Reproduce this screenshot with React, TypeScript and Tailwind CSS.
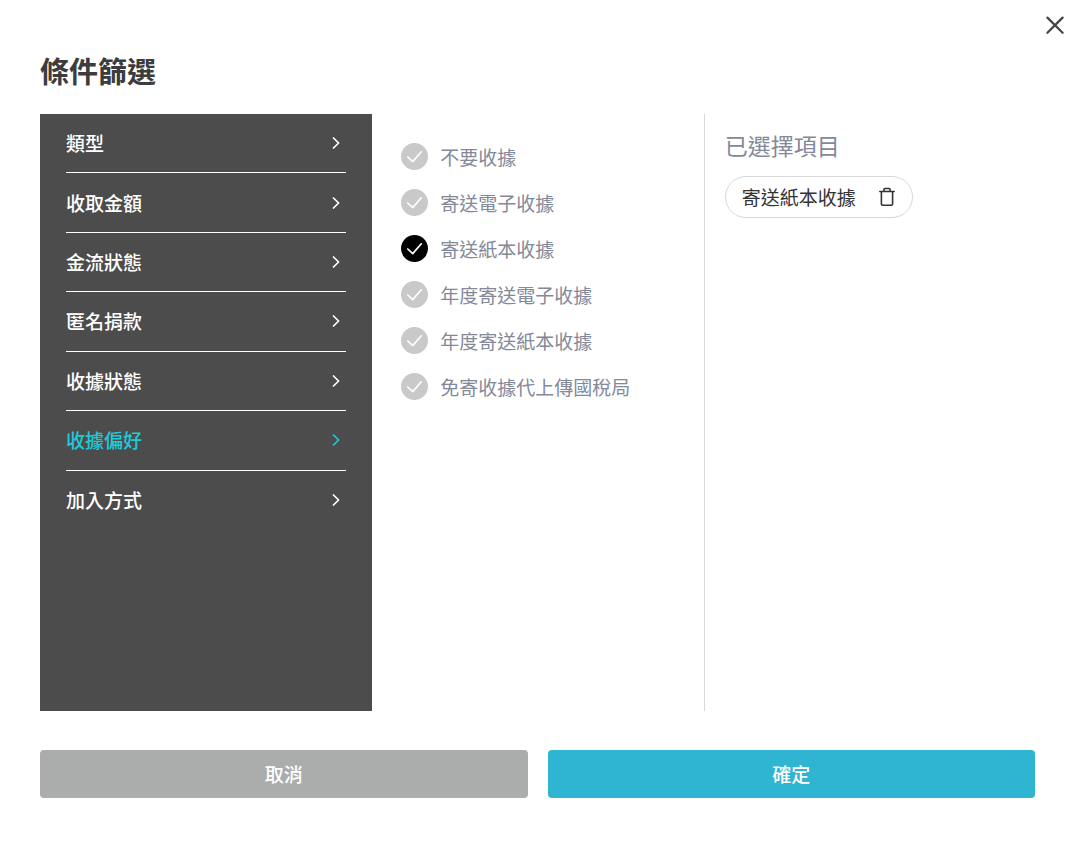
import { useState } from "react";

const categories = ["類型", "收取金額", "金流狀態", "匿名捐款", "收據狀態", "收據偏好", "加入方式"];

const receiptOptions = [
  "不要收據",
  "寄送電子收據",
  "寄送紙本收據",
  "年度寄送電子收據",
  "年度寄送紙本收據",
  "免寄收據代上傳國稅局",
];

function CloseIcon() {
  return (
    <svg viewBox="0 0 18 18" className="size-[18px]" fill="none" stroke="currentColor" strokeWidth="2.2" strokeLinecap="round" aria-hidden="true">
      <path d="M1.4 1.6 16.6 16.8M16.6 1.6 1.4 16.8" />
    </svg>
  );
}

function ChevronIcon() {
  return (
    <svg viewBox="0 0 8 12" className="h-3 w-2" fill="none" stroke="currentColor" strokeWidth="1.7" strokeLinecap="round" strokeLinejoin="round" aria-hidden="true">
      <path d="M1.5 1 6.6 6 1.5 11" />
    </svg>
  );
}

function CheckIcon() {
  return (
    <svg viewBox="0 0 27 27" className="pointer-events-none col-start-1 row-start-1 size-[27px]" fill="none" stroke="#fff" strokeWidth="1.7" strokeLinecap="round" strokeLinejoin="round" aria-hidden="true">
      <path d="M6.8 14 11.7 18.6 20.3 8.8" />
    </svg>
  );
}

function TrashIcon() {
  return (
    <svg viewBox="0 0 18 20" className="h-5 w-[18px]" fill="none" stroke="currentColor" strokeWidth="1.6" strokeLinecap="round" strokeLinejoin="round" aria-hidden="true">
      <path d="M1.8 4.5H16.2M3.4 4.5V17Q3.4 18.2 4.6 18.2H13.4Q14.6 18.2 14.6 17V4.5M6 4.3V2.2Q6 1.5 6.7 1.5H11.3Q12 1.5 12 2.2V4.3" />
    </svg>
  );
}

export default function App() {
  const [active, setActive] = useState("收據偏好");
  const [selected, setSelected] = useState(["寄送紙本收據"]);

  const toggle = (name: string) =>
    setSelected((items) => (items.includes(name) ? items.filter((item) => item !== name) : [...items, name]));

  return (
    <main className="min-h-screen bg-white pb-[45px] pl-10 font-['Noto_Sans_CJK_TC',sans-serif] text-[19px] leading-7 text-[#333]" lang="zh-Hant">
      <header className="flex items-start justify-between pr-4 pt-4">
        <h1 className="pt-[33px] text-[29px] font-bold leading-[42px] text-[#3c3c3c]">條件篩選</h1>
        <button type="button" aria-label="關閉" className="text-[#444]">
          <CloseIcon />
        </button>
      </header>

      <div className="mt-[23px] grid min-h-[597px] grid-cols-3 pr-[43px]">
        <nav className="bg-[#4c4c4c] px-[26px]">
          <ul className="grid min-h-[416px] auto-rows-fr divide-y divide-white">
            {categories.map((name) => (
              <li key={name} className="flex">
                <button
                  type="button"
                  onClick={() => setActive(name)}
                  className={`flex w-full items-center justify-between pr-[6px] font-medium ${name === active ? "text-[#1ecad9]" : "text-white"}`}
                >
                  {name}
                  <ChevronIcon />
                </button>
              </li>
            ))}
          </ul>
        </nav>

        <fieldset aria-label="收據偏好" className="flex flex-col gap-[18px] border-r border-[#d8d8d8] pl-[29px] pt-[29px]">
          {receiptOptions.map((name) => (
            <label key={name} className="flex items-start gap-3 text-[#838999]">
              <span className="grid">
                <input
                  type="checkbox"
                  checked={selected.includes(name)}
                  onChange={() => toggle(name)}
                  className="col-start-1 row-start-1 size-[27px] appearance-none rounded-full bg-[#c9c9c9] checked:bg-black"
                />
                <CheckIcon />
              </span>
              {name}
            </label>
          ))}
        </fieldset>

        <section className="pl-5 pt-[15px]">
          <h2 className="text-[23px] leading-8 text-[#838999]">已選擇項目</h2>
          <ul className="mt-[15px] flex flex-col items-start gap-3">
            {selected.map((name) => (
              <li key={name} className="flex items-center gap-[22px] rounded-full border border-[#d8d8d8] px-4 py-[6px]">
                {name}
                <button type="button" aria-label={`移除${name}`} onClick={() => toggle(name)}>
                  <TrashIcon />
                </button>
              </li>
            ))}
          </ul>
        </section>
      </div>

      <footer className="mt-[39px] grid grid-cols-2 gap-5 pr-[45px] font-medium text-white">
        <button type="button" className="rounded-[4px] bg-[#abadac] py-[10px]">取消</button>
        <button type="button" className="rounded-[4px] bg-[#2fb4d1] py-[10px]">確定</button>
      </footer>
    </main>
  );
}
